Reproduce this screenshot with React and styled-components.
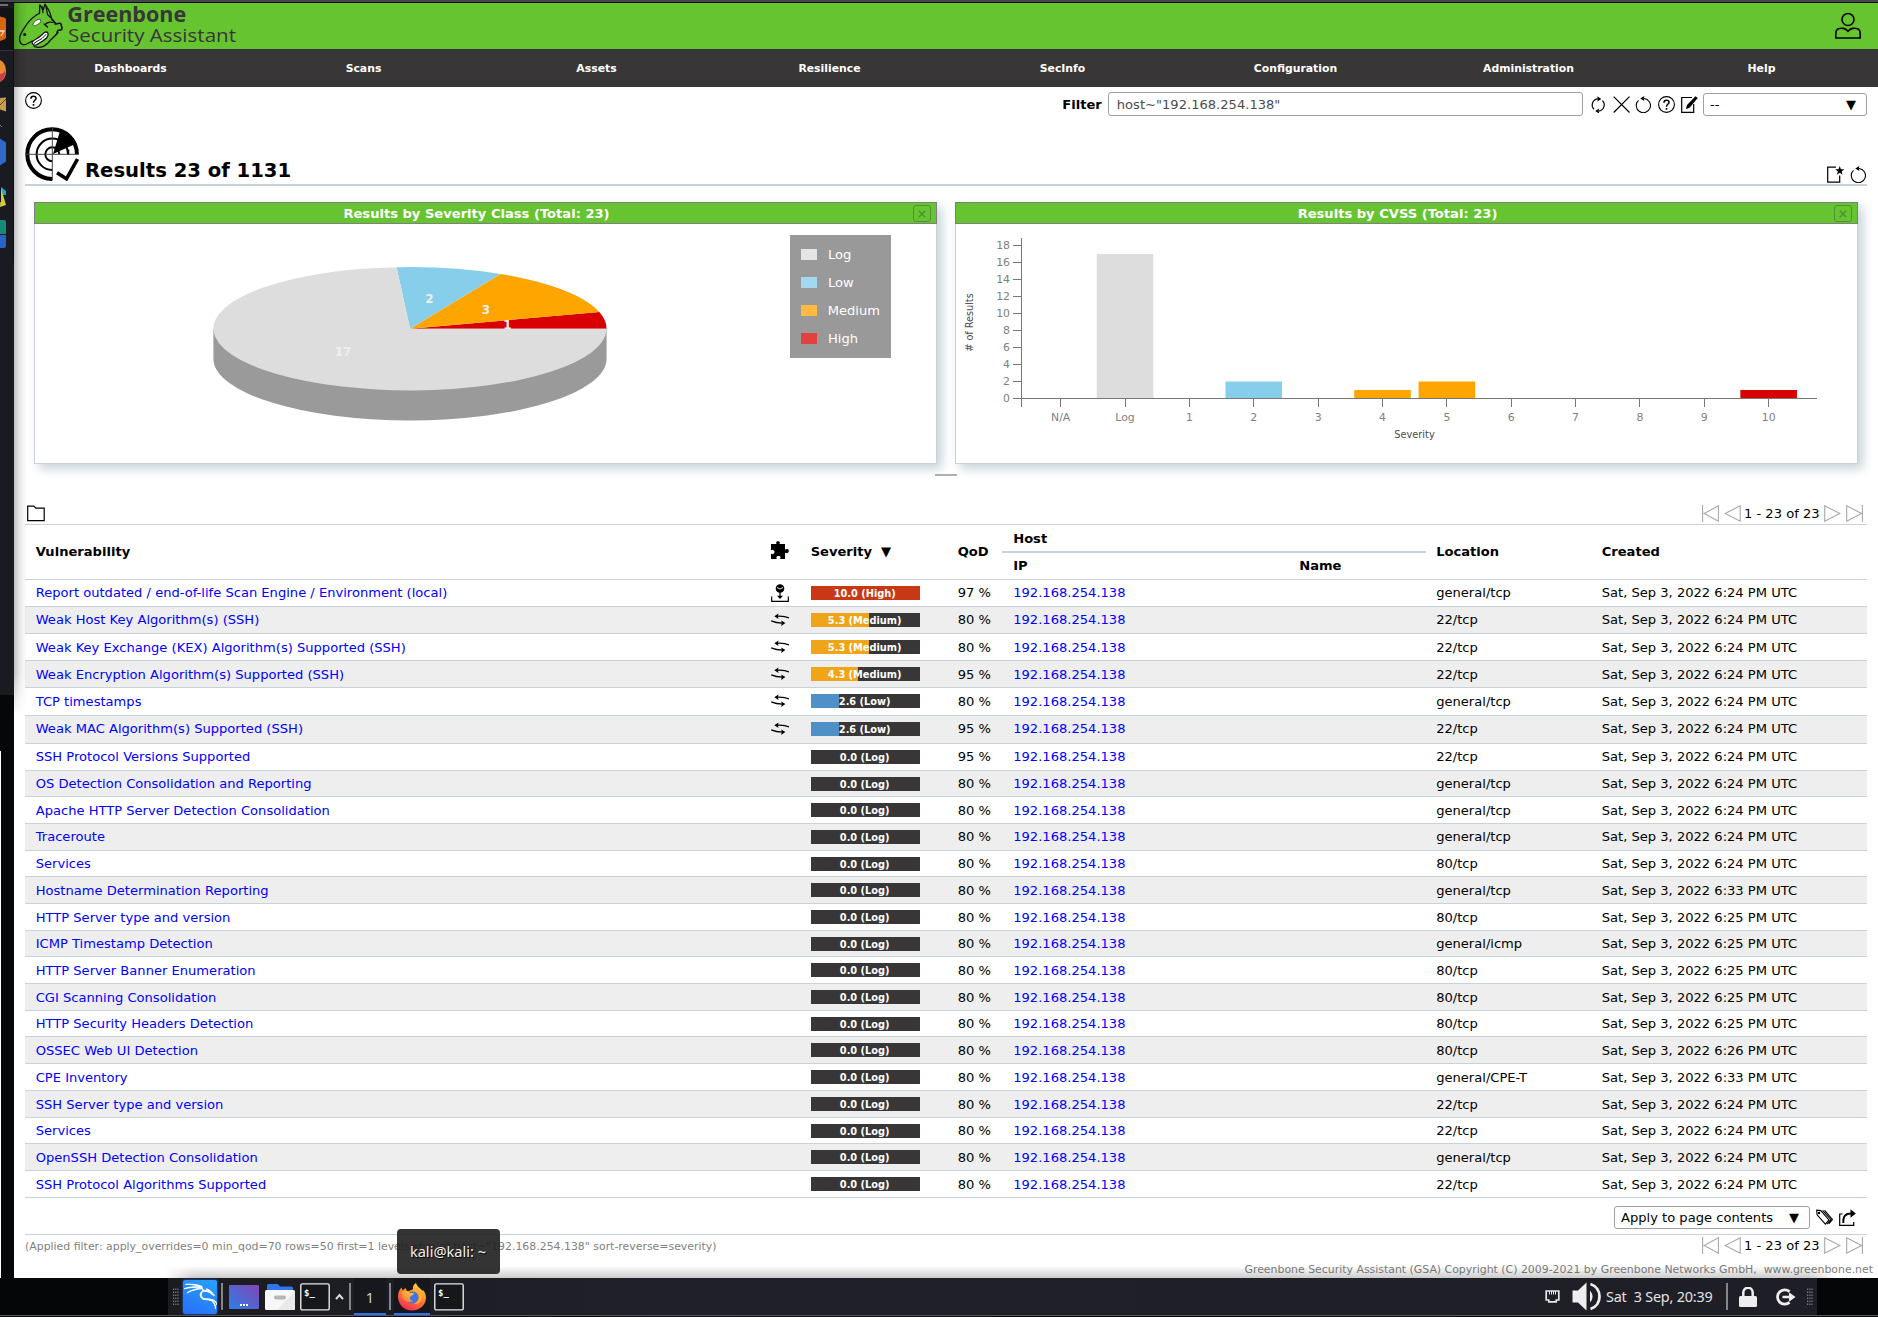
import React from "react";
import styled, { createGlobalStyle } from "styled-components";
import { SiKalilinux } from "react-icons/si";

const LINE = "#c8d3d9";
const DARK = "#393637";
const GREEN = "#66c430";

const Global = createGlobalStyle`
  html, body { margin: 0; background: #000; }
  body { font-family: "DejaVu Sans", sans-serif; font-size: 13.09px; color: #000; overflow: hidden; }
  * { box-sizing: border-box; }
  svg { display: block; flex: none; }
`;

const Screen = styled.div`
  width: 1878px; height: 1317px; display: flex; flex-direction: column; background: #050607;
`;
const TopEdge = styled.div`
  height: 3px; flex: none; background: #45474b; border-bottom: 1px solid #0d0e10;
`;
const Middle = styled.div`display: flex; height: 1275px; flex: none;`;
const Dock = styled.div`
  width: 14px; flex: none; background: linear-gradient(#1a1b20 0 692px, #060708 692px);
`;
const DockEdge = styled.div`width: 1px; height: 527px; margin-top: 488px; background: #fff;`;
const Page = styled.div`
  position: relative; width: 1864px; flex: none; background: #fff; display: flex; flex-direction: column;
  &::before {
    content: ""; position: absolute; z-index: 2; left: 0; top: 0; width: 13px; height: 712px; pointer-events: none;
    background: linear-gradient(90deg, rgba(0,0,0,.24), rgba(0,0,0,.08) 50%, transparent);
    mask-image: linear-gradient(#000 94%, transparent);
  }
  &::after {
    content: ""; position: absolute; left: 150px; right: 40px; bottom: 0; height: 12px; pointer-events: none;
    background: linear-gradient(transparent, rgba(0,0,0,.2));
    mask-image: linear-gradient(90deg, transparent, #000 30px, #000 calc(100% - 30px), transparent);
  }
`;
const Header = styled.header`
  height: 46px; flex: none; background: ${GREEN}; display: flex; justify-content: space-between; padding: 0 16px 0 4px;
`;
const UserSlot = styled.div`padding-top: 9px;`;
const Nav = styled.nav`height: 38px; flex: none; background: ${DARK}; display: grid; grid-template-columns: repeat(8, 1fr);`;
const NavItem = styled.a`
  color: #fff; font-weight: bold; font-size: 10.85px; text-align: center; line-height: 38px; padding-top: 1px;
`;
const Content = styled.main`padding: 0 11px; display: flex; flex-direction: column;`;
const Toolbar = styled.div`height: 40px; display: flex; justify-content: space-between; padding-top: 5px;`;
const FilterBar = styled.div`display: flex; align-items: center; height: 24px;`;
const FilterLabel = styled.label`font-weight: bold; margin-right: 6px;`;
const FilterInput = styled.div`
  width: 475px; height: 24px; border: 1px solid #9f9f9f; border-radius: 3px; padding-left: 8px; line-height: 23px; color: #4c4c4c;
`;
const FilterIcons = styled.div`display: flex; gap: 5.8px; margin: 1px 5px 0 7px;`;
const Select = styled.div`
  width: ${(p) => p.$w}px; height: 23px; border: 1px solid #9f9f9f; border-radius: 3px; background: #fff;
  display: flex; justify-content: space-between; align-items: center; padding: 0 10px 0 6px; margin-top: ${(p) => p.$mt || 0}px;
`;
const Arrow = styled.span`font-size: 13px; line-height: 1;`;
const TitleRow = styled.div`
  height: 59px; border-bottom: 2px solid ${LINE}; display: flex; align-items: flex-end; justify-content: space-between;
`;
const TitleGroup = styled.div`display: flex; align-items: flex-end; gap: 6px; padding-bottom: 3px;`;
const Title = styled.h1`margin: 0; font-size: 19.62px; line-height: 24px; height: 22px; white-space: nowrap;`;
const TitleIcons = styled.div`display: flex; gap: 6px; padding-bottom: 1px;`;

const Dashboard = styled.section`
  display: grid; grid-template-columns: 1fr 1fr; gap: 18px; padding: 16px 9px 0; height: 278px;
`;
const Panel = styled.article`display: flex; flex-direction: column; box-shadow: 5px 5px 10px ${LINE};`;
const PanelHead = styled.div`
  height: 22px; flex: none; background: ${GREEN}; border: 1px solid #7f7f7f; display: flex; align-items: center; padding-right: 5px;
`;
const PanelTitle = styled.h2`
  flex: 1; margin: 0; padding: 1px 0 0 5px; text-align: center; color: #fff; font-size: 13.08px; line-height: 20px;
`;
const PanelClose = styled.button`
  width: 18px; height: 17px; padding: 0; border: 1px solid #519032; border-radius: 3px; background: none;
  display: grid; place-items: center; margin-top: 1px;
`;
const PanelBody = styled.div`
  flex: 1; display: flex; background: #fff; border: 1px solid ${LINE}; border-top: 0;
`;
const Legend = styled.div`
  width: 101px; height: 123px; margin: 11px 0 0 5px; padding: 6px 11px; background: #999; display: flex; flex-direction: column;
`;
const LegendRow = styled.div`display: flex; align-items: center; gap: 11px; height: 28px; color: #fff;`;
const Swatch = styled.span`width: 16px; height: 11px; background: ${(p) => p.$c};`;
const ResizeHandle = styled.div`width: 22px; height: 2px; margin: 10px auto 0; background: #b0b0b0;`;

const ListBar = styled.div`
  height: ${(p) => p.$h}px; display: flex; justify-content: space-between; align-items: flex-end; padding: 0 4px 2px 2px;
`;
const Pager = styled.div`display: flex; align-items: center; height: 17px; line-height: 17px;`;
const PagerText = styled.span`width: 76px; margin: 0 4px 0 3px; white-space: nowrap;`;
const PagerGap = styled.span`width: ${(p) => p.$w}px;`;

const COLS = "735px 40px 147px 55.5px 285.5px 137.5px 165.5px 1fr";
const Head = styled.div`
  height: 56px; border-top: 1px solid ${LINE}; border-bottom: 1px solid ${LINE}; display: grid; grid-template-columns: ${COLS};
  padding-left: 10.7px; font-weight: bold; line-height: 54px;
`;
const HeadHost = styled.div`
  grid-column: span 2; margin: 0 0 0 -11px; width: 424px; display: grid; grid-template-rows: 26px 2px 26px;
`;
const HostLine = styled.div`background: ${LINE};`;
const HostTop = styled.div`padding-left: 11px; line-height: 27px;`;
const HostSub = styled.div`display: grid; grid-template-columns: 286px 1fr; padding-left: 11px; line-height: 26px;`;
const HeadIcon = styled.div`padding: 16px 0 0 0;`;
const SortArrow = styled.span`margin-left: 9px;`;
const Row = styled.div`
  height: ${(p) => p.$h}px; border-bottom: 1px solid ${LINE}; background: ${(p) => (p.$odd ? "#eee" : "#fff")};
  display: grid; grid-template-columns: ${COLS}; padding-left: 10.7px;
`;
const Cell = styled.div`padding-top: ${(p) => 4 + p.$drop}px; line-height: 17px; height: 20px; white-space: nowrap;`;
const LinkCell = styled(Cell)`color: #0000ff;`;
const IconCell = styled.div`padding-top: 4px;`;
const BarCell = styled.div`padding-top: 6px;`;
const SevBar = styled.div`
  width: 109px; height: 14px; color: #fff; font-size: 9.8px; font-weight: bold; text-align: center; line-height: 15px; padding-right: 1px;
  background: linear-gradient(90deg, ${(p) => p.$c} ${(p) => p.$pct}%, ${DARK} ${(p) => p.$pct}%);
`;
const ActionBar = styled.div`
  height: 37px; border-bottom: 1px solid ${LINE}; display: flex; justify-content: flex-end; padding: 8px 11px 0 0;
`;
const ActionIcons = styled.div`display: flex; gap: 6px; padding: 3px 0 0 6px;`;
const FootBar = styled.div`height: 22px; display: flex; justify-content: space-between; padding: 2px 4px 0 0;`;
const Applied = styled.div`font-size: 10.91px; line-height: 20px; color: #7f7f7f; white-space: nowrap;`;
const Copyright = styled.footer`
  font-size: 10.91px; line-height: 14px; color: #7f7f7f; text-align: right; margin: 6px -6px 0 0; white-space: pre;
`;

const Taskbar = styled.div`
  height: 39px; flex: none; position: relative; display: flex; justify-content: space-between; padding: 0 61px 0 168px;
  background: #050607; border-bottom: 2px solid #0b0b0d;
`;
const TaskInner = styled.div`
  flex: 1; height: 37px; display: flex; justify-content: space-between; background: linear-gradient(90deg, #1b1b20, #20202a 30%, #1e1e26);
`;
const BottomLine = styled.div`position: absolute; left: 0; right: 0; top: 37px; height: 1px; background: #56575a;`;
const TaskSide = styled.div`display: flex; align-items: center; padding: ${(p) => p.$pad};`;
const TaskItem = styled.div`
  width: ${(p) => p.$w}px; height: 37px; display: flex; align-items: center; justify-content: center; color: #d0d0d4;
  font: 14.5px "Noto Sans", sans-serif; background: ${(p) => (p.$active ? "#17181d" : "none")};
  border-bottom: 2px solid ${(p) => (p.$active ? "#2a74f5" : "transparent")}; border-top: 2px solid transparent;
`;
const TaskSep = styled.div`width: 2px; height: 27px; background: #85868a; margin: ${(p) => p.$m};`;
const KaliTile = styled.div`
  width: 34px; height: 34px; display: grid; place-items: center; color: #fff; background: linear-gradient(25deg, #2a6df8, #25a3ff);
  border-radius: 2px; box-shadow: 0 0 3px #2468d0;
  & svg { stroke: #fff; stroke-width: .7; }
`;
const Clock = styled.div`
  width: 108px; font: 14.4px "Noto Sans", sans-serif; color: #e2e2e4; white-space: pre; line-height: 37px; height: 37px;
  letter-spacing: -.2px;
`;
const Tooltip = styled.div`
  position: absolute; z-index: 5; left: 397px; top: -49px; width: 103px; height: 45px; border-radius: 4px; text-align: center;
  background: rgba(30,30,30,.9); color: #f0f0f0; font: 14.6px/45px "Noto Sans", sans-serif; text-shadow: 1px 1px 1px #000;
  padding-right: 1px;
`;

/* ---------- icons ---------- */
const Ico = ({ w = 17, h = 17, box = "0 0 17 17", sw = 1.2, stroke = "#000", fill = "none", children }) => (
  <svg width={w} height={h} viewBox={box} fill={fill} stroke={stroke} strokeWidth={sw}>{children}</svg>
);
const HelpIcon = () => (
  <Ico sw={1.1}>
    <circle cx="8.5" cy="8.5" r="7.9" />
    <path d="M5.9 6.7C5.9 3.3 11 3.4 11 6.4C11 8.4 8.5 8.2 8.5 10.7" strokeWidth="1.5" />
    <path d="M8.5 12v1.7" strokeWidth="1.6" />
  </Ico>
);
const RefreshIcon = () => (
  <Ico sw={1.2}>
    <path d="M4 13.3A6.1 6.1 0 0 1 8 2.9M12.4 4.7A6.1 6.1 0 0 1 8.5 15.1" />
    <path d="M11.3 2.9L7.3 .2l.6 2.7-.6 2.7zM5.200 15.100l4-2.700-.6 2.700.6 2.600z" fill="#000" stroke="none" />
  </Ico>
);
const CrossIcon = () => <Ico><path d="M.7.7l15.8 15.8M16.5.7L.7 16.5" /></Ico>;
const ResetIcon = () => (
  <Ico sw={1.1}>
    <path d="M3.5 4.4A7.1 7.1 0 1 0 9 2.5" />
    <path d="M5.2 2.5L9.4 .1l-.6 2.4.6 2.6z" fill="#000" stroke="none" />
  </Ico>
);
const EditIcon = () => (
  <Ico>
    <path d="M11 1.5H.7v14.8h12V8" />
    <path d="M14.5.3l2.3 1.8-8 9.3-3.8 1.8 1-4.2z" fill="#000" stroke="none" />
  </Ico>
);
const NewIcon = () => (
  <Ico>
    <path d="M9 1.2H.7v15h12V9.5" />
    <path d="M12.7 0l1.2 3.2 3.3.1-2.6 2.1 1 3.4-2.9-2-2.8 2 1-3.4L8.3 3.3l3.3-.1z" fill="#000" stroke="none" />
  </Ico>
);
const FolderIcon = () => (
  <Ico w={18} box="0 0 18 17"><path d="M.7 15.6V1.2h6.2l2 2h8.3v12.4z" /></Ico>
);
const UserIcon = () => (
  <Ico w={28} h={28} box="0 0 28 28" sw={1.6}>
    <circle cx="14" cy="7.5" r="6" />
    <path d="M1.8 26V21C2 16.5 6 15.8 9.5 16.4C11.5 16.8 13 18 14 19.3C15 18 16.5 16.8 18.5 16.4C22 15.8 26 16.5 26.2 21V26z" />
  </Ico>
);
const FirstIcon = () => <Ico stroke="#a8a8a8" sw={1.1}><path d="M.6 0v17M16.4 .8v15.4L2.2 8.5z" /></Ico>;
const PrevIcon = () => <Ico stroke="#a8a8a8" sw={1.1}><path d="M16.2.8v15.4L1.2 8.5z" /></Ico>;
const NextIcon = () => <Ico stroke="#a8a8a8" sw={1.1}><path d="M.7.8v15.4L15.8 8.5z" /></Ico>;
const LastIcon = () => <Ico stroke="#a8a8a8" sw={1.1}><path d="M16.4 0v17M.7.8v15.4L15.5 8.5z" /></Ico>;
const PuzzleIcon = () => (
  <Ico w={18} h={18} box="0 0 18 18" fill="#000" stroke="none">
    <path d="M0 3h5.3c.5-.5-.4-1 0-2C5.7 0 8.4 0 8.7 1c.4 1-.5 1.5 0 2H14v5.3c.5.5 1.2-.4 2.3-.2 2 .4 2 3.5 0 4-1.1.2-1.8-.7-2.3-.2V18H9.3c-.5-.6.5-1 .2-2-.4-1.4-3.6-1.4-4 0-.3 1 .6 1.4 0 2H0v-5c.6-.5 1 .3 2 .1 2-.4 2-3.9 0-4.2-1-.2-1.4.6-2 .1z" />
  </Ico>
);
const VendorIcon = () => (
  <Ico w={18} h={18} box="0 0 18 18">
    <path d="M.7 12.5v4.8h16.6v-4.8M9 8v5" />
    <path d="M6 11.7h6l-3 3.2z" fill="#000" stroke="none" />
    <circle cx="9" cy="4.5" r="4.3" fill="#000" stroke="none" />
    <path d="M6 3.5l3 1.5 3-1.5" stroke="#fff" strokeWidth=".9" />
  </Ico>
);
const MitigateIcon = () => (
  <Ico w={18} h={18} box="0 0 18 18">
    <path d="M18 6.9C14 5.1 10 5 5.5 5.3M.2 9.9C4 11.7 8 12.2 12.5 12.1" strokeWidth="1.2" />
    <path d="M3.3 5.2l4.2-2.7-.6 2.8.6 2.7zM14.4 12.1l-4.2-2.7.6 2.700-.6 2.800z" fill="#000" stroke="none" />
  </Ico>
);
const TagsIcon = () => (
  <Ico sw={1.1}>
    <path d="M.7 1.2l.4 4.6 8.3 9.3 3.6-4.2L4.8 1.6z" />
    <path d="M6.6 1.3l8.2 9.2-3.6 4.6M8.6 1.3l7.9 9.1-3.5 4.2" />
    <circle cx="3" cy="3.9" r=".7" />
  </Ico>
);
const ExportIcon = () => (
  <Ico sw={1.2}>
    <path d="M3.5 5H.7v11.3h14V13" />
    <path d="M4.3 14C4 7 6.5 4.5 12 4.5" strokeWidth="2" />
    <path d="M11.5 .3l5.3 4.2-5.3 4.3z" fill="#000" stroke="none" />
  </Ico>
);

const ResultsIcon = () => (
  <svg width="54" height="54" viewBox="0 0 54 54" fill="none" stroke="#000">
    <path d="M51.9 27.3A24.8 24.8 0 1 0 27.3 51.9" strokeWidth="4" />
    <path d="M43 27.3A15.7 15.7 0 1 0 27.3 43" strokeWidth="2" />
    <path d="M34.3 27.3A7 7 0 1 0 27.3 34.3" strokeWidth="2" />
    <path d="M27.3 1v52M1 27.3h53" stroke="#444" strokeWidth="1" />
    <path d="M28 27L35.5 2.5A26 26 0 0 1 51.5 16.5z" fill="#000" stroke="none" />
    <path d="M43.5 22.5v5" strokeWidth="1.5" />
    <path d="M32 45.8l9.5 6L52.5 32" strokeWidth="3.6" />
  </svg>
);

const Logo = () => (
  <svg width="230" height="46" viewBox="18 3 230 46">
    <g fill="none" stroke="#111" strokeWidth="1.3" strokeLinejoin="round" strokeLinecap="round">
      <path d="M39.5 13.5L39.8 5l3.5 4.5L45 4.2l4 6.5c1 2 2 5.5 3 9" fill={GREEN} />
      <path d="M42 6.5l1 6M46 6.5l1.5 8 3 3" />
      <path d="M39.5 13c-5 3-9.500 6.500-12.500 11C24 28.500 20.500 33 19.600 37.500c-.4 4 1 7.500 4.500 7.300 3-.2 5-2.500 8-3.800" />
      <path d="M32 42c3-3 6.500-4 9-6.500 2.500-1.500 2.500-3.500 5-3.500 2.500 0 3 3 .5 6-3 3-6.500 4.500-9.500 6.500-2 1.400-5 .6-5-2.500z" fill="#fff" />
      <path d="M34 43.500l4-2.800 4-2.200 4-4" strokeWidth="1" />
      <path d="M34 46.500c6 2.200 10 .5 14-3.500 3-4 7.500-7 10-10.500M45 25c1.500-2.500 4.500-3.500 8-2.500M47.500 27l-3.500-3" />
      <path d="M52 19.500c2 1 2 3 3.500 3.500M55 24c3 0 4-1.500 5.500-.5 1.500 1 .5 3 1.500 4.500 0 2-1.500 2.500-2.500 2-2 0-2 1.500-2.500 2.500" strokeWidth="1.600" />
    </g>
    <path d="M33 24.500c1-3 4-5 7-5.500l1 3c-2 1.500-4 3-6.500 4z" fill="#fff" stroke="#111" strokeWidth=".6" />
    <circle cx="24.700" cy="34.400" r="1.500" fill="#111" />
    <text x="67.300" y="22.300" fontFamily="Open Sans, sans-serif" fontWeight="700" fontSize="21.500" fill={DARK} textLength="119" lengthAdjust="spacingAndGlyphs">Greenbone</text>
    <text x="68" y="41.500" fontFamily="Open Sans, sans-serif" fontSize="19" fill={DARK} textLength="168" lengthAdjust="spacingAndGlyphs">Security Assistant</text>
  </svg>
);

const DockArt = () => (
  <svg width="14" height="260" viewBox="0 3 14 260">
    <path d="M0 5h8" stroke="#8a8b8e" strokeWidth="1.5" />
    <rect x="0" y="8" width="13" height="42" fill="#121317" />
    <path d="M0 50.5h14" stroke="#33343a" />
    <path d="M13.5 3v260" stroke="#0f1013" />
    <path d="M0 16.5l4 1q2 .5 2 2v18q0 1.5-2 2l-4 1.500z" fill="#d8660f" />
    <path d="M0 31h4l-3 5" fill="none" stroke="#f3dccb" strokeWidth="1.3" />
    <path d="M0 60q6 3 6 11t-6 11z" fill="#e88a2f" />
    <path d="M0 74q4 0 5-4 1 8-5 12z" fill="#c73e48" />
    <path d="M0 98l6-.5v14l-6-2z" fill="#c79e4c" />
    <path d="M0 105l6-6" stroke="#5b4216" />
    <path d="M0 125l2 2" stroke="#777" />
    <path d="M0 138.5l6 4v19l-6 4z" fill="#2f69c9" />
    <path d="M0 186l6 5v4H1z" fill="#22a5c4" />
    <path d="M1 188l5 17-6 2z" fill="#d0cf3a" />
    <path d="M.5 185v17" stroke="#111" />
    <path d="M0 220h4q2 0 2 2v12H0z" fill="#178a78" />
    <path d="M0 235h6v11q0 2-2 2H0z" fill="#2c62c8" />
  </svg>
);

/* ---------- taskbar icons ---------- */
const Grip = () => (
  <svg width="6" height="18" viewBox="0 0 6 18">
    {[0, 3, 6, 9, 12, 15].map((y) => [0, 2.2, 4.4].map((x) => (
      <rect key={`${x}-${y}`} x={x} y={y + 0.5} width="1.2" height="1.5" fill="#77787c" />
    )))}
  </svg>
);
const DesktopIcon = () => (
  <svg width="30" height="24" viewBox="0 0 30 24">
    <defs><linearGradient id="desk" x1="0" y1="1" x2="1" y2="0"><stop offset="0" stopColor="#2f7de8" /><stop offset="1" stopColor="#8246b4" /></linearGradient></defs>
    <rect width="30" height="24" rx="1" fill="url(#desk)" />
    <path d="M11 19h2v2h-2zM14 19h2v2h-2zM17 19h2v2h-2z" fill="#fff" />
  </svg>
);
const FilesIcon = () => (
  <svg width="30" height="28" viewBox="0 0 30 28">
    <path d="M2 8V2.5Q2 1 3.5 1H13l2 2.5h11.5q1.5 0 1.5 1.5v3z" fill="#2f74ea" />
    <rect y="7" width="30" height="20" rx="1.5" fill="#f7f7f8" />
    <path d="M30 8v17.5q0 1.5-1.5 1.5H12z" fill="#e9e9ea" />
    <rect x="9" y="12.5" width="12" height="4" rx="2" fill="#b5b5b5" />
  </svg>
);
const TermIcon = () => (
  <svg width="30" height="28" viewBox="0 0 30 28">
    <rect x=".8" y=".9" width="28.4" height="26" rx="1.5" fill="#16171a" stroke="#e7e7e7" strokeWidth="1.4" />
    <text x="4" y="13" fill="#fff" fontFamily="DejaVu Sans Mono, monospace" fontWeight="bold" fontSize="9">$_</text>
  </svg>
);
const FirefoxIcon = () => (
  <svg width="28" height="28" viewBox="0 0 28 28">
    <defs>
      <linearGradient id="fx" x1=".8" y1="0" x2=".3" y2="1"><stop offset="0" stopColor="#ffe14a" /><stop offset=".45" stopColor="#ff8a24" /><stop offset="1" stopColor="#f0295c" /></linearGradient>
      <linearGradient id="fxl" x1="1" y1="0" x2="0" y2="1"><stop offset="0" stopColor="#ffd83e" /><stop offset="1" stopColor="#ff7139" /></linearGradient>
    </defs>
    <path d="M14 27.5C6 27.5 0 21.5 0 13.5 0 9.5 1.5 6.5 3.5 4.5l1 3L7.5 5l1.5 3c2 0 4-.5 6-2-.5-2.5.5-4.5 3-6 1 4 4.5 5 6.5 8l.5-1c2 2 3 5 3 7.5C28 21.5 22 27.5 14 27.5z" fill="url(#fx)" />
    <circle cx="14.5" cy="14.5" r="6" fill="#3f74e8" />
    <path d="M4 8.5c3-1 6 0 8 1.5l4 .2c-.5 2-3 2-4 4-.8 2 1 3.5 3.5 3.5-4 2.5-10 .5-11.5-4.2z" fill="url(#fxl)" />
    <path d="M20 10c2.500 4 1 9-4 10.500 6 1 9-4 8-9z" fill="#ffb02e" />
  </svg>
);
const CaretIcon = () => <svg width="9" height="8" viewBox="0 0 9 8"><path d="M1 6.2L4.5 2 8 6.2" fill="none" stroke="#ddd" strokeWidth="2" /></svg>;
const NetIcon = () => (
  <svg width="15" height="13" viewBox="0 0 15 13">
    <path d="M1.2 1h12.600v9h-2.600v1.800H3.800V10H1.200z" fill="none" stroke="#e6e6e8" strokeWidth="1.700" />
    <path d="M4.500 1v3.500M6.500 1v3.500M8.500 1v3.500M10.500 1v3.500" stroke="#e6e6e8" />
  </svg>
);
const VolumeIcon = () => (
  <svg width="30" height="29" viewBox="0 0 30 29">
    <path d="M.5 8.5H6L14.5.5v28L6 20.5H.5z" fill="#eee" />
    <path d="M18 8.5q5 6 0 12z" fill="#eee" />
    <path d="M18.5 2c12 4 12 21 0 25" fill="none" stroke="#eee" strokeWidth="2.8" />
  </svg>
);
const LockIcon = () => (
  <svg width="18" height="20" viewBox="0 0 18 20">
    <rect y="9" width="18" height="11" rx="1.5" fill="#eee" />
    <path d="M4.3 10V5.5a4.7 4.7 0 0 1 9.4 0V10" fill="none" stroke="#eee" strokeWidth="2.5" />
  </svg>
);
const LogoutIcon = () => (
  <svg width="20" height="18" viewBox="0 0 20 18">
    <path d="M13.5 3.6A7.2 7.2 0 1 0 13.5 14.4" fill="none" stroke="#eee" strokeWidth="2.8" />
    <path d="M6.5 7.8H13V4.3L19.5 9 13 13.7v-3.5H6.5z" fill="#eee" />
  </svg>
);

/* ---------- charts ---------- */
const CX = 375, CY = 104.7, RX = 196.6, RY = 61.7, DEPTH = 30;
const SLICES = [
  { n: 1, c: "#d80000", x: 472.5, y: 105 },
  { n: 3, c: "#ffa500", x: 451, y: 90 },
  { n: 2, c: "#87ceeb", x: 394.5, y: 79 },
  { n: 17, c: "#dddddd", x: 308, y: 131.5 },
];
const PieChart = () => {
  let start = 0;
  const point = (a) => `${CX + RX * Math.cos(a)} ${CY - RY * Math.sin(a)}`;
  return (
    <svg width="750" height="238" viewBox="0 0 750 238">
      <path d={`M${CX - RX} ${CY}V${CY + DEPTH}A${RX} ${RY} 0 0 0 ${CX + RX} ${CY + DEPTH}V${CY}z`} fill="#9a9a9a" />
      {SLICES.map((s) => {
        const end = start + (s.n / 23) * 2 * Math.PI;
        const d = `M${CX} ${CY}L${point(start)}A${RX} ${RY} 0 ${s.n > 11 ? 1 : 0} 0 ${point(end)}z`;
        start = end;
        return <path key={s.n} d={d} fill={s.c} />;
      })}
      <g fill="#eee" fontSize="12" fontWeight="bold" textAnchor="middle" fontFamily="DejaVu Sans">
        {SLICES.map((s) => <text key={s.n} x={s.x} y={s.y}>{s.n}</text>)}
      </g>
    </svg>
  );
};

const BINS = [["N/A", 0], ["Log", 17, "#dddddd"], ["1", 0], ["2", 2, "#87ceeb"], ["3", 0], ["4", 1, "#ffa500"], ["5", 2, "#ffa500"], ["6", 0], ["7", 0], ["8", 0], ["9", 0], ["10", 1, "#d80000"]];
const BarChart = () => (
  <svg width="900" height="238" viewBox="0 0 900 238" fontFamily="DejaVu Sans">
    {BINS.map(([l, v, c], i) => v > 0 && (
      <rect key={l} x={104.7 + 64.36 * i - 28.3} y={174.5 - v * 8.5} width="56.6" height={v * 8.5} fill={c} />
    ))}
    <g stroke="#777" fill="none">
      <path d="M65.5 14v169M57 174.5H861" />
      {[2, 4, 6, 8, 10, 12, 14, 16, 18].map((v) => <path key={v} d={`M57 ${Math.floor(174.9 - v * 8.5) + 0.5}h8`} />)}
      {BINS.map(([l], i) => <path key={l} d={`M${Math.floor(104.7 + 64.36 * i) + 0.5} 175v8`} />)}
    </g>
    <g fill="#7f7f7f" fontSize="10.9">
      {[0, 2, 4, 6, 8, 10, 12, 14, 16, 18].map((v) => <text key={v} x="54" y={177.600 - v * 8.5} textAnchor="end">{v}</text>)}
      {BINS.map(([l], i) => <text key={l} x={104.7 + 64.36 * i} y="197.3" textAnchor="middle">{l}</text>)}
    </g>
    <g fill="#4c4c4c" fontSize="9.8" textAnchor="middle">
      <text x="458.5" y="214">Severity</text>
      <text transform="translate(17 98.5) rotate(-90)" textLength="58.5">{"# of Results"}</text>
    </g>
  </svg>
);

const LEGEND = [["Log", "#e5e5e5"], ["Low", "#a3d9f0"], ["Medium", "#ffbb41"], ["High", "#e14141"]];
const NAV = ["Dashboards", "Scans", "Assets", "Resilience", "SecInfo", "Configuration", "Administration", "Help"];

/* name, icon, score, class, qod, location, minute, row height, baseline shift */
const ROWS = [
  ["Report outdated / end-of-life Scan Engine / Environment (local)", "v", "10.0", "High", 97, "general/tcp", "24", 27, 0],
  ["Weak Host Key Algorithm(s) (SSH)", "m", "5.3", "Medium", 80, "22/tcp", "24", 27, 0],
  ["Weak Key Exchange (KEX) Algorithm(s) Supported (SSH)", "m", "5.3", "Medium", 80, "22/tcp", "24", 27, 1],
  ["Weak Encryption Algorithm(s) Supported (SSH)", "m", "4.3", "Medium", 95, "22/tcp", "24", 27, 1],
  ["TCP timestamps", "m", "2.6", "Low", 80, "general/tcp", "24", 28, 1],
  ["Weak MAC Algorithm(s) Supported (SSH)", "m", "2.6", "Low", 95, "22/tcp", "24", 28, 0],
  ["SSH Protocol Versions Supported", "", "0.0", "Log", 95, "22/tcp", "24", 27, 0],
  ["OS Detection Consolidation and Reporting", "", "0.0", "Log", 80, "general/tcp", "24", 26, 0],
  ["Apache HTTP Server Detection Consolidation", "", "0.0", "Log", 80, "general/tcp", "24", 27, 1],
  ["Traceroute", "", "0.0", "Log", 80, "general/tcp", "24", 27, 0],
  ["Services", "", "0.0", "Log", 80, "80/tcp", "24", 26, 0],
  ["Hostname Determination Reporting", "", "0.0", "Log", 80, "general/tcp", "33", 27, 1],
  ["HTTP Server type and version", "", "0.0", "Log", 80, "80/tcp", "25", 27, 1],
  ["ICMP Timestamp Detection", "", "0.0", "Log", 80, "general/icmp", "25", 26, 0],
  ["HTTP Server Banner Enumeration", "", "0.0", "Log", 80, "80/tcp", "25", 27, 1],
  ["CGI Scanning Consolidation", "", "0.0", "Log", 80, "80/tcp", "25", 27, 1],
  ["HTTP Security Headers Detection", "", "0.0", "Log", 80, "80/tcp", "25", 26, 0],
  ["OSSEC Web UI Detection", "", "0.0", "Log", 80, "80/tcp", "26", 27, 1],
  ["CPE Inventory", "", "0.0", "Log", 80, "general/CPE-T", "33", 27, 1],
  ["SSH Server type and version", "", "0.0", "Log", 80, "22/tcp", "24", 27, 1],
  ["Services", "", "0.0", "Log", 80, "22/tcp", "24", 26, 0],
  ["OpenSSH Detection Consolidation", "", "0.0", "Log", 80, "general/tcp", "24", 27, 1],
  ["SSH Protocol Algorithms Supported", "", "0.0", "Log", 80, "22/tcp", "24", 27, 1],
];
const SEV_COLOR = { High: "#c83814", Medium: "#f0a519", Low: "#4f91c7", Log: DARK };

const Pagination = () => (
  <Pager>
    <FirstIcon /><PagerGap $w={5.5} /><PrevIcon />
    <PagerText>1 - 23 of 23</PagerText>
    <NextIcon /><PagerGap $w={5} /><LastIcon />
  </Pager>
);

const ChartPanel = ({ title, children }) => (
  <Panel>
    <PanelHead>
      <PanelTitle>{title}</PanelTitle>
      <PanelClose>
        <svg width="8" height="8" viewBox="0 0 8 8"><path d="M.8.8l6.4 6.4M7.2.8L.8 7.2" stroke="#519032" strokeWidth="1.5" /></svg>
      </PanelClose>
    </PanelHead>
    <PanelBody>{children}</PanelBody>
  </Panel>
);

const ResultRow = ({ row, odd }) => {
  const [name, icon, score, cls, qod, loc, min, h, drop] = row;
  return (
    <Row $h={h} $odd={odd}>
      <LinkCell $drop={drop}>{name}</LinkCell>
      <IconCell>{icon === "v" ? <VendorIcon /> : icon === "m" ? <MitigateIcon /> : null}</IconCell>
      <BarCell><SevBar $c={SEV_COLOR[cls]} $pct={Number(score) * 10}>{`${score} (${cls})`}</SevBar></BarCell>
      <Cell $drop={drop}>{qod} %</Cell>
      <LinkCell $drop={drop}>192.168.254.138</LinkCell>
      <Cell $drop={drop} />
      <Cell $drop={drop}>{loc}</Cell>
      <Cell $drop={drop}>{`Sat, Sep 3, 2022 6:${min} PM UTC`}</Cell>
    </Row>
  );
};

export default function App() {
  return (
    <Screen>
      <Global />
      <TopEdge />
      <Middle>
        <Dock><DockArt /><DockEdge /></Dock>
        <Page>
          <Header><Logo /><UserSlot><UserIcon /></UserSlot></Header>
          <Nav>{NAV.map((n) => <NavItem key={n}>{n}</NavItem>)}</Nav>
          <Content>
            <Toolbar>
              <HelpIcon />
              <FilterBar>
                <FilterLabel>Filter</FilterLabel>
                <FilterInput>host~"192.168.254.138"</FilterInput>
                <FilterIcons><RefreshIcon /><CrossIcon /><ResetIcon /><HelpIcon /><EditIcon /></FilterIcons>
                <Select $w={164} $mt={1}><span>--</span><Arrow>▼</Arrow></Select>
              </FilterBar>
            </Toolbar>
            <TitleRow>
              <TitleGroup><ResultsIcon /><Title>Results 23 of 1131</Title></TitleGroup>
              <TitleIcons><NewIcon /><ResetIcon /></TitleIcons>
            </TitleRow>
            <Dashboard>
              <ChartPanel title="Results by Severity Class (Total: 23)">
                <PieChart />
                <Legend>{LEGEND.map(([l, c]) => <LegendRow key={l}><Swatch $c={c} />{l}</LegendRow>)}</Legend>
              </ChartPanel>
              <ChartPanel title="Results by CVSS (Total: 23)"><BarChart /></ChartPanel>
            </Dashboard>
            <ResizeHandle />
            <ListBar $h={48}><FolderIcon /><Pagination /></ListBar>
            <Head>
              <div>Vulnerability</div>
              <HeadIcon><PuzzleIcon /></HeadIcon>
              <div>Severity<SortArrow>▼</SortArrow></div>
              <div>QoD</div>
              <HeadHost>
                <HostTop>Host</HostTop>
                <HostLine />
                <HostSub><div>IP</div><div>Name</div></HostSub>
              </HeadHost>
              <div>Location</div>
              <div>Created</div>
            </Head>
            {ROWS.map((r, i) => <ResultRow key={i} row={r} odd={i % 2 === 1} />)}
            <ActionBar>
              <Select $w={196}><span>Apply to page contents</span><Arrow>▼</Arrow></Select>
              <ActionIcons><TagsIcon /><ExportIcon /></ActionIcons>
            </ActionBar>
            <FootBar>
              <Applied>(Applied filter: apply_overrides=0 min_qod=70 rows=50 first=1 levels=hmlgf host~"192.168.254.138" sort-reverse=severity)</Applied>
              <Pagination />
            </FootBar>
            <Copyright>{"Greenbone Security Assistant (GSA) Copyright (C) 2009-2021 by Greenbone Networks GmbH,  www.greenbone.net"}</Copyright>
          </Content>
        </Page>
      </Middle>
      <Taskbar>
        <TaskInner>
          <TaskSide $pad="0 0 0 5px">
            <Grip />
            <TaskItem $w={42}><KaliTile><SiKalilinux size={33} /></KaliTile></TaskItem>
            <TaskSep $m="0 5px 0 0" />
            <TaskItem $w={32}><DesktopIcon /></TaskItem>
            <TaskItem $w={40}><FilesIcon /></TaskItem>
            <TaskItem $w={30}><TermIcon /></TaskItem>
            <TaskItem $w={18}><CaretIcon /></TaskItem>
            <TaskSep $m="0 3px 0 1px" />
            <TaskItem $w={32} $active>1</TaskItem>
            <TaskSep $m="0 3px 0 3px" />
            <TaskItem $w={36} $active><FirefoxIcon /></TaskItem>
            <TaskItem $w={38}><TermIcon /></TaskItem>
          </TaskSide>
          <TaskSide $pad="0 4px 0 0">
            <TaskItem $w={29}><NetIcon /></TaskItem>
            <TaskItem $w={39}><VolumeIcon /></TaskItem>
            <Clock>{"Sat  3 Sep, 20:39"}</Clock>
            <TaskSep $m="0 0 0 12px" />
            <TaskItem $w={39}><LockIcon /></TaskItem>
            <TaskItem $w={37}><LogoutIcon /></TaskItem>
            <TaskSide $pad="0 0 0 3px"><Grip /></TaskSide>
          </TaskSide>
        </TaskInner>
        <BottomLine />
        <Tooltip>kali@kali: ~</Tooltip>
      </Taskbar>
    </Screen>
  );
}
